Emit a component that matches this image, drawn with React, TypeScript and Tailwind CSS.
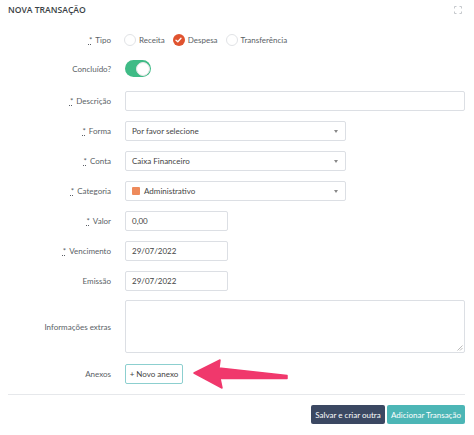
import React from "react";

const Req = () => (
  <span className="underline decoration-dotted underline-offset-[1px] mr-[3px]">*</span>
);

function Label({ children }: { children: React.ReactNode }) {
  return (
    <div className="w-[111px] shrink-0 text-right text-[8px] text-[#5a5f66] leading-none">
      {children}
    </div>
  );
}

function Caret() {
  return (
    <span className="w-0 h-0 border-l-[2.5px] border-r-[2.5px] border-t-[3px] border-l-transparent border-r-transparent border-t-[#888]" />
  );
}

function Select({ children }: { children: React.ReactNode }) {
  return (
    <div className="ml-[14px] w-[221px] h-[20px] border border-[#dcdfe4] rounded-[2px] flex items-center justify-between pl-[6px] pr-[7px] text-[8px] text-[#444] bg-white">
      <div className="flex items-center">{children}</div>
      <Caret />
    </div>
  );
}

function Input({ value, wide }: { value?: string; wide?: boolean }) {
  return (
    <div
      className={`ml-[14px] h-[20px] border border-[#dcdfe4] rounded-[2px] flex items-center px-[6px] text-[8px] text-[#444] bg-white ${
        wide ? "flex-1" : "w-[103px]"
      }`}
    >
      {value}
    </div>
  );
}

function Radio({ checked, label }: { checked?: boolean; label: string }) {
  return (
    <div className="flex items-center mr-[8px]">
      {checked ? (
        <span className="w-[12px] h-[12px] rounded-full bg-[#e0532f] flex items-center justify-center">
          <svg width="7" height="6" viewBox="0 0 7 6">
            <path d="M1 3.2 L2.8 4.8 L6 1.2" fill="none" stroke="#fff" strokeWidth="1.3" strokeLinecap="round" strokeLinejoin="round" />
          </svg>
        </span>
      ) : (
        <span className="w-[12px] h-[12px] rounded-full border border-[#e1e3e6] bg-white" />
      )}
      <span className="ml-[3px] text-[8px] text-[#5a5f66]">{label}</span>
    </div>
  );
}

export default function App() {
  return (
    <div className="relative w-[474px] h-[435px] bg-white font-['Lato',sans-serif] overflow-hidden">
      <div className="pl-[8px] pr-[9px]">
        {/* Header */}
        <div className="flex items-center justify-between h-[16px] mt-[2px]">
          <div className="text-[8.6px] font-semibold font-['Open_Sans',sans-serif] text-[#3a3f45]">NOVA TRANSAÇÃO</div>
          <svg width="8" height="8" viewBox="0 0 8 8" className="mr-[3px]">
            <path d="M0.5 2.5 V0.5 H2.5 M5.5 0.5 H7.5 V2.5 M7.5 5.5 V7.5 H5.5 M2.5 7.5 H0.5 V5.5" fill="none" stroke="#c5c8cc" strokeWidth="1" />
          </svg>
        </div>

        {/* Tipo */}
        <div className="flex items-center h-[16px] mt-[14px] -ml-[8px]">
          <Label>
            <Req />Tipo
          </Label>
          <div className="ml-[13px] flex items-center">
            <Radio label="Receita" />
            <Radio checked label="Despesa" />
            <Radio label="Transferência" />
          </div>
        </div>

        {/* Concluído */}
        <div className="flex items-center h-[17px] mt-[12px] -ml-[8px]">
          <Label>Concluído?</Label>
          <div className="ml-[14px] w-[26px] h-[17px] rounded-full bg-[#3fbb86] relative">
            <span className="absolute right-[1px] top-[1.5px] w-[14px] h-[14px] rounded-full bg-white border border-[#e6e6e6]" />
          </div>
        </div>

        {/* Descrição */}
        <div className="flex items-center h-[20px] mt-[14px] -ml-[8px]">
          <Label>
            <Req />Descrição
          </Label>
          <Input wide />
        </div>

        <div className="flex items-center h-[20px] mt-[10px] -ml-[8px]">
          <Label>
            <Req />Forma
          </Label>
          <Select>Por favor selecione</Select>
        </div>

        <div className="flex items-center h-[20px] mt-[10px] -ml-[8px]">
          <Label>
            <Req />Conta
          </Label>
          <Select>Caixa Financeiro</Select>
        </div>

        <div className="flex items-center h-[20px] mt-[10px] -ml-[8px]">
          <Label>
            <Req />Categoria
          </Label>
          <Select>
            <span className="w-[8px] h-[8px] rounded-[1px] bg-[#ee8a5b] mr-[4px]" />
            Administrativo
          </Select>
        </div>

        <div className="flex items-center h-[20px] mt-[10px] -ml-[8px]">
          <Label>
            <Req />Valor
          </Label>
          <Input value="0,00" />
        </div>

        <div className="flex items-center h-[20px] mt-[10px] -ml-[8px]">
          <Label>
            <Req />Vencimento
          </Label>
          <Input value="29/07/2022" />
        </div>

        <div className="flex items-center h-[20px] mt-[10px] -ml-[8px]">
          <Label>Emissão</Label>
          <Input value="29/07/2022" />
        </div>

        <div className="flex items-center h-[53px] mt-[9px] -ml-[8px]">
          <Label>Informações extras</Label>
          <div className="ml-[14px] flex-1 h-[53px] border border-[#dcdfe4] rounded-[2px] relative bg-white">
            <svg width="6" height="6" viewBox="0 0 6 6" className="absolute right-[1px] bottom-[1px]">
              <path d="M5.5 0.5 L0.5 5.5 M5.5 3 L3 5.5" stroke="#aaa" strokeWidth="0.8" />
            </svg>
          </div>
        </div>

        <div className="flex items-center h-[20px] mt-[11px] -ml-[8px]">
          <Label>Anexos</Label>
          <div className="ml-[14px] w-[58px] h-[20px] border border-[#8ccfcf] rounded-[2px] flex items-center justify-center text-[8px] text-[#444] bg-white">
            + Novo anexo
          </div>
        </div>

        <div className="mt-[10px] h-px bg-[#e6e8eb]" />

        <div className="flex justify-end mt-[10px] gap-[2px]">
          <div className="w-[74px] h-[19px] rounded-[2px] bg-[#3b4862] text-white text-[8px] flex items-center justify-center">
            Salvar e criar outra
          </div>
          <div className="w-[78px] h-[19px] rounded-[2px] bg-[#4cb6b6] text-white text-[8px] flex items-center justify-center">
            Adicionar Transação
          </div>
        </div>
      </div>

      {/* Arrow annotation */}
      <svg
        className="absolute left-[192px] top-[356px]"
        width="100"
        height="38"
        viewBox="0 0 100 38"
      >
        <polygon
          points="2,17 28,4 27,12 95,19.5 95,22.5 28,22.5 30,32"
          fill="#f0386c"
          stroke="#f0386c"
          strokeWidth="1.5"
          strokeLinejoin="round"
        />
      </svg>
    </div>
  );
}
